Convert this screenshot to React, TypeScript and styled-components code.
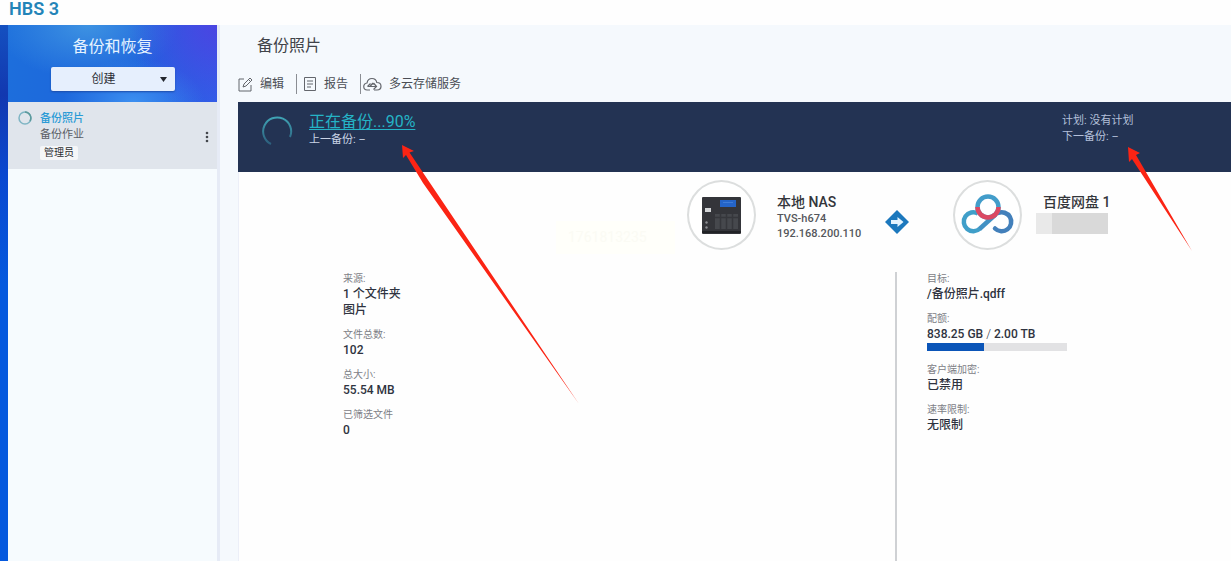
import React from "react";
import styled, { createGlobalStyle } from "styled-components";

const GlobalStyle = createGlobalStyle`
  *, *::before, *::after { box-sizing: border-box; }
  html, body, #root { height: 100%; }
  body {
    margin: 0;
    background: #fefefe;
    color: #33363d;
    font-family: Roboto, "Noto Sans CJK SC", sans-serif;
    font-size: 12px;
    line-height: 16px;
  }
  h1, h2, h3, p, dl, dd { margin: 0; }
`;

const Page = styled.div`
  position: relative;
  display: flex;
  flex-direction: column;
  min-height: 100%;
`;

const TitleBar = styled.header`
  height: 25px;
  padding-left: 9px;
  h1 {
    font-size: 18px;
    line-height: 18px;
    font-weight: 600;
    color: #2384b8;
  }
`;

const Body = styled.div`
  flex: 1;
  display: flex;
  background: #f5f9fd;
`;

const Desktop = styled.div`
  flex: 0 0 8px;
  background: linear-gradient(#1450c0, #1238b0 70px, #0a48d0 150px, #0559de 260px);
`;

const Sidebar = styled.aside`
  flex: 0 0 212px;
  border-right: 3px solid #e6ebf6;
  background: #f6fbfe;
`;

const SidebarHead = styled.div`
  height: 77px;
  padding-top: 12px;
  display: flex;
  flex-direction: column;
  align-items: center;
  gap: 10px;
  background:
    radial-gradient(circle at 100% 0%, #4a45e2 0, rgba(64, 76, 226, 0) 40%),
    radial-gradient(ellipse at 38% 0%, #3d92e2 0, rgba(50, 136, 224, 0) 50%),
    radial-gradient(ellipse at 60% 100%, #3c8ff0 0, rgba(60, 143, 240, 0) 40%),
    linear-gradient(100deg, #1d6fdc, #1d62dc 60%, #2f5fe8);
  h2 {
    font-size: 16px;
    line-height: 20px;
    font-weight: 400;
    color: #e6f3ff;
  }
`;

const CreateButton = styled.button`
  position: relative;
  width: 124px;
  height: 24px;
  padding: 0 18px 0 0;
  border: 0;
  border-radius: 2px;
  background: #e6effd;
  box-shadow: 0 1px 2px #1d4da8;
  color: #2c3038;
  font: 12px/24px Roboto, "Noto Sans CJK SC", sans-serif;
  svg { position: absolute; right: 8px; top: 9px; }
`;

const Job = styled.div`
  display: flex;
  height: 67px;
  padding: 9px 8px 0 10px;
  background: #e0e5ec;
`;

const JobText = styled.div`
  flex: 1;
  padding-left: 8px;
  color: #5c5f66;
  h3 {
    font-size: 11px;
    line-height: 16px;
    font-weight: 500;
    color: #2b9bd6;
  }
  p { font-size: 11px; line-height: 16px; }
`;

const Tag = styled.span`
  display: inline-block;
  margin-top: 3px;
  padding: 0 4px;
  border-radius: 2px;
  background: #f5f6f8;
  color: #2c2e33;
  font-size: 10px;
  line-height: 14px;
`;

const IconButton = styled.button`
  align-self: flex-start;
  display: flex;
  margin-top: 20px;
  padding: 0;
  border: 0;
  background: none;
`;

const Main = styled.main`
  flex: 1;
  min-width: 0;
  display: flex;
  flex-direction: column;
  padding-left: 18px;
`;

const PageTitle = styled.h2`
  padding: 10px 0 0 19px;
  font-size: 16px;
  line-height: 22px;
  font-weight: 400;
  color: #404349;
`;

const Toolbar = styled.div`
  display: flex;
  align-items: center;
  height: 20px;
  margin: 17px 0 8px;
`;

const Tool = styled.button`
  display: flex;
  align-items: center;
  gap: 7px;
  height: 20px;
  padding: 0 12px 0 0;
  border: 0;
  background: none;
  color: #4b4e55;
  font: 12px/20px Roboto, "Noto Sans CJK SC", sans-serif;
  & + & {
    padding-left: 6px;
    border-left: 1px solid #8a8d93;
  }
  & + & + & { padding-left: 2px; }
`;

const Banner = styled.section`
  display: flex;
  height: 70px;
  padding: 10px 0 0 24px;
  background: #233353;
  color: #c9d3e6;
  line-height: 16px;
  svg { margin-top: 4px; }
`;

const Status = styled.div`
  flex: 1;
  padding-left: 16px;
  font-size: 11px;
  a {
    display: block;
    width: fit-content;
    font-size: 16px;
    line-height: 20px;
    color: #25b3c6;
    text-decoration: underline;
    text-underline-offset: 2px;
  }
`;

const Schedule = styled.div`
  flex: 0 0 169px;
  padding-top: 1px;
  font-size: 11px;
  color: #b4c0da;
`;

const Panel = styled.section`
  position: relative;
  flex: 1;
  display: flex;
  flex-direction: column;
  border-left: 1px solid #eceff8;
  background: #fefefe;
`;

const Watermark = styled.span`
  position: absolute;
  left: 317px;
  top: 49px;
  width: 119px;
  padding-left: 12px;
  background: #fffffa;
  color: #fbfbf4;
  font-size: 14px;
  line-height: 33px;
`;

const Route = styled.div`
  display: flex;
  align-items: flex-start;
  padding: 8px 0 0 448px;
`;

const Disc = styled.div`
  display: flex;
  align-items: center;
  justify-content: center;
  width: 69px;
  height: 70px;
  border: 2px solid #dcdede;
  border-radius: 50%;
  background: #fff;
`;

const NodeText = styled.div<{ $width: number }>`
  width: ${(p) => p.$width}px;
  padding: 13px 0 0 21px;
  font-size: 11px;
  line-height: 15px;
  color: #54565b;
  p { font-weight: 500; }
  h3 {
    font-size: 14px;
    line-height: 18px;
    font-weight: 500;
    color: #34363b;
  }
`;

const Direction = styled.div`
  display: flex;
  width: 68px;
  padding-top: 30px;
`;

const Masked = styled.div`
  width: 72px;
  height: 21px;
  margin: 2px 0 0 -7px;
  background: linear-gradient(90deg, #e9e9e9 0 16px, #d9d9d9 16px);
`;

const Details = styled.div`
  flex: 1;
  display: grid;
  grid-template-columns: 656fr 336fr;
  margin-top: 22px;
`;

const Column = styled.dl<{ $indent: number; $ruled?: boolean }>`
  display: flex;
  flex-direction: column;
  gap: 10px;
  padding-left: ${(p) => p.$indent}px;
  border-left: ${(p) => (p.$ruled ? "2px solid #cfd1d4" : "0")};
`;

const Field = styled.div`
  dt {
    font-size: 10px;
    line-height: 14px;
    color: #7d8086;
  }
  dd {
    font-size: 12px;
    line-height: 16px;
    font-weight: 500;
    color: #2f3340;
  }
`;

const Slash = styled.span`
  font-weight: 300;
`;

const Meter = styled.div`
  width: 140px;
  height: 8px;
  margin: 1px 0 2px;
  background: #e2e2e4;
`;

const MeterFill = styled.div`
  height: 100%;
  background: #0b55b8;
`;

const Annotations = styled.svg`
  position: absolute;
  left: 0;
  top: 0;
  pointer-events: none;
`;

const Caret = () => (
  <svg width="7" height="6" viewBox="0 0 7 6"><path d="M0 1h7L3.500 6z" fill="#22262e" /></svg>
);

const SmallRing = () => (
  <svg width="14" height="14" viewBox="0 0 14 14" fill="none">
    <circle cx="7" cy="7" r="6" stroke="#7fb5c4" strokeWidth="1.500" />
    <path d="M7 1a6 6 0 0 1 5 9" stroke="#5d9a9c" strokeWidth="1.500" />
  </svg>
);

const BigRing = () => (
  <svg width="31" height="31" viewBox="0 0 31 31" fill="none">
    <defs>
      <linearGradient id="ring" x1="0" y1="0" x2="0" y2="1">
        <stop offset="0" stopColor="#3fa3b4" />
        <stop offset="1" stopColor="#2c5f7d" />
      </linearGradient>
    </defs>
    <path d="M9 28A14 14 0 1 1 28 21" stroke="url(#ring)" strokeWidth="2" />
  </svg>
);

const Dots = () => (
  <svg width="4" height="12" viewBox="0 0 4 12" fill="#44474d">
    <circle cx="2" cy="2" r="1.300" /><circle cx="2" cy="6" r="1.300" /><circle cx="2" cy="10" r="1.300" />
  </svg>
);

const EditIcon = () => (
  <svg width="15" height="15" viewBox="0 0 15 15" fill="none" stroke="#63666c">
    <path d="M6 2H1v12h12V8" />
    <path d="M5 10l1-3 6-6 2 2-6 6zM10.500 2.500l2 2" />
  </svg>
);

const ReportIcon = () => (
  <svg width="14" height="16" viewBox="0 0 14 16" fill="none" stroke="#63666c">
    <path d="M1.500 1.500h11v13h-11zM4 5h6M4 8h6M4 11h4" />
  </svg>
);

const CloudIcon = () => (
  <svg width="19" height="15" viewBox="0 0 19 15" fill="none" stroke="#63666c" strokeWidth="1.200">
    <path d="M7 13H4.500a3.500 3.500 0 0 1-.5-7C4.500 3 6.500 1.500 9 1.500c2.600 0 4.300 1.600 4.800 4 2.500 0 4.200 1.500 4.200 3.800S16.500 13 14 13h-3" />
    <path d="M4.500 9.500h9M7.500 6.500l-3 3M10.500 6l3 3.500-3 3M7 9.500l2.500-3 1 1" />
  </svg>
);

const NasIcon = () => (
  <svg width="39" height="37" viewBox="0 0 39 37">
    <rect width="39" height="37" rx="1" fill="#34353a" />
    <rect x="18" y="3" width="16" height="7" fill="#2464c8" />
    <path d="M21 5.500h10" stroke="#3f7cd6" />
    <rect x="3" y="11" width="6" height="4" fill="#d4d6d8" />
    <path d="M13 17h23v15H13z" fill="#46484d" />
    <path d="M18.500 17v15M24.500 17v15M30.500 17v15M13 20.500h23" stroke="#36373c" strokeWidth="1.500" />
    <path d="M0 35h39" stroke="#222327" strokeWidth="2" />
    <circle cx="4.500" cy="25.500" r="1.200" fill="#8b8d91" /><circle cx="4.500" cy="30.500" r="1.200" fill="#8b8d91" />
  </svg>
);

const RouteArrow = () => (
  <svg width="24" height="24" viewBox="0 0 24 24">
    <path d="M12 0l12 12-12 12L0 12z" fill="#1c78bd" />
    <path d="M6 10h6.500V7l6 5-6 5v-3H6z" fill="#e4f4ff" />
  </svg>
);

const NetdiskIcon = () => (
  <svg width="54" height="42" viewBox="0 0 54 42" fill="none" strokeWidth="4.500">
    <path d="M19 34.500A9.500 9.500 0 1 1 17 19.500" stroke="#409fc9" />
    <path d="M34 34.500A9.500 9.500 0 1 0 37 19" stroke="#4380bb" strokeLinecap="round" />
    <circle cx="27" cy="13" r="10.500" stroke="#439dca" />
    <path d="M18.500 35L34.500 20.500" stroke="#4291c4" />
    <path d="M16.500 13a10.500 10.500 0 0 0 21 0" stroke="#db4963" />
  </svg>
);

export default function App() {
  return (
    <Page>
      <GlobalStyle />
      <TitleBar><h1>HBS 3</h1></TitleBar>
      <Body>
        <Desktop />
        <Sidebar>
          <SidebarHead>
            <h2>备份和恢复</h2>
            <CreateButton type="button">创建<Caret /></CreateButton>
          </SidebarHead>
          <Job>
            <SmallRing />
            <JobText>
              <h3>备份照片</h3>
              <p>备份作业</p>
              <Tag>管理员</Tag>
            </JobText>
            <IconButton type="button" aria-label="更多"><Dots /></IconButton>
          </Job>
        </Sidebar>
        <Main>
          <PageTitle>备份照片</PageTitle>
          <Toolbar>
            <Tool type="button"><EditIcon />编辑</Tool>
            <Tool type="button"><ReportIcon />报告</Tool>
            <Tool type="button"><CloudIcon />多云存储服务</Tool>
          </Toolbar>
          <Banner>
            <BigRing />
            <Status>
              <a href="#status">正在备份...90%</a>
              <p>上一备份: –</p>
            </Status>
            <Schedule>
              <p>计划: 没有计划</p>
              <p>下一备份: –</p>
            </Schedule>
          </Banner>
          <Panel>
            <Watermark>1761813235</Watermark>
            <Route>
              <Disc><NasIcon /></Disc>
              <NodeText $width={129}>
                <h3>本地 NAS</h3>
                <p>TVS-h674</p>
                <p>192.168.200.110</p>
              </NodeText>
              <Direction><RouteArrow /></Direction>
              <Disc><NetdiskIcon /></Disc>
              <NodeText $width={140}>
                <h3>百度网盘 1</h3>
                <Masked />
              </NodeText>
            </Route>
            <Details>
              <Column $indent={104}>
                <Field><dt>来源:</dt><dd>1 个文件夹</dd><dd>图片</dd></Field>
                <Field><dt>文件总数:</dt><dd>102</dd></Field>
                <Field><dt>总大小:</dt><dd>55.54 MB</dd></Field>
                <Field><dt>已筛选文件</dt><dd>0</dd></Field>
              </Column>
              <Column $indent={30} $ruled>
                <Field><dt>目标:</dt><dd>/备份照片.qdff</dd></Field>
                <Field>
                  <dt>配额:</dt>
                  <dd>838.25 GB <Slash>/</Slash> 2.00 TB<Meter><MeterFill style={{ width: "41%" }} /></Meter></dd>
                </Field>
                <Field><dt>客户端加密:</dt><dd>已禁用</dd></Field>
                <Field><dt>速率限制:</dt><dd>无限制</dd></Field>
              </Column>
            </Details>
          </Panel>
        </Main>
      </Body>
      <Annotations width="1231" height="561" viewBox="0 0 1231 561" fill="#fb2414" aria-hidden="true">
        <path d="M402 145l12 6-4.500 1.500L430 183 579 404 423 183 406 155l-3 3z" />
        <path d="M1128 147l12 6-4 2 56 96-60-92-3 3z" />
      </Annotations>
    </Page>
  );
}
